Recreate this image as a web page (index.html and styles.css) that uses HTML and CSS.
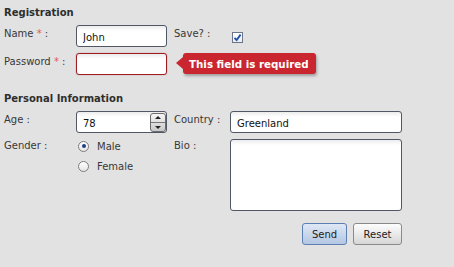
FILE: index.html
```html
<!DOCTYPE html>
<html lang="en">
<head>
  <meta charset="UTF-8">
  <title>Registration Form</title>
  <link rel="stylesheet" href="styles.css">
</head>
<body>
  <form class="form">
    <h2 class="section-title">Registration</h2>
    <div class="grid reg-grid">
      <label class="lbl">Name <span class="req">*</span> :</label>
      <div class="cell"><input class="field" type="text" value="John"></div>
      <label class="lbl">Save? :</label>
      <div class="cell">
        <span class="check">
          <svg width="9" height="9" viewBox="0 0 9 9"><path d="M1.5 4.8 L3.6 7 L7.6 1.6" fill="none" stroke="#1d4fa8" stroke-width="1.8"/></svg>
        </span>
      </div>

      <label class="lbl">Password <span class="req">*</span> :</label>
      <div class="cell tip-anchor">
        <input class="field invalid" type="password">
        <div class="tip">This field is required</div>
      </div>
    </div>

    <h2 class="section-title second">Personal Information</h2>
    <div class="grid info-grid">
      <label class="lbl">Age :</label>
      <div class="cell spin-wrap">
        <input class="field" type="text" value="78">
        <span class="spinner">
          <span class="spin-up"></span>
          <span class="spin-down"></span>
        </span>
      </div>
      <label class="lbl">Country :</label>
      <div class="cell"><input class="field wide" type="text" value="Greenland"></div>

      <label class="lbl top">Gender :</label>
      <div class="cell radios">
        <div class="radio-item"><span class="radio on"></span>Male</div>
        <div class="radio-item"><span class="radio"></span>Female</div>
      </div>
      <label class="lbl top">Bio :</label>
      <div class="cell"><textarea class="field area"></textarea></div>
    </div>

    <div class="actions">
      <button type="button" class="btn primary">Send</button>
      <button type="button" class="btn">Reset</button>
    </div>
  </form>
</body>
</html>
```

FILE: styles.css
```css
body {
  margin: 0;
  padding: 4px;
  background-color: #e2e2e2;
  font-family: "DejaVu Sans", Verdana, sans-serif;
  font-size: 10px;
  color: #333;
}
.form {
  width: 398px;
}
.section-title {
  margin: 0;
  font-size: 10px;
  font-weight: bold;
  line-height: 17px;
  color: #2e2e2e;
}
.section-title.second {
  margin-top: 15px;
}
.grid {
  display: grid;
  grid-template-columns: 72px 98px 56px 172px;
  row-gap: 6px;
}
.reg-grid {
  margin-top: 4px;
}
.info-grid {
  margin-top: 4px;
}
.lbl {
  display: block;
  line-height: 18px;
  color: #383838;
}
.lbl.top {
  line-height: 14px;
}
.req {
  color: #e0555c;
}
.cell {
  display: flex;
  align-items: center;
}
.field {
  box-sizing: border-box;
  width: 91px;
  height: 22px;
  margin: 0;
  padding: 3px 6px 0;
  border: 1px solid #4f5864;
  border-radius: 3px;
  background: linear-gradient(#ececec, #fff 5px);
  font-family: "DejaVu Sans", Verdana, sans-serif;
  font-size: 10px;
  color: #111;
  outline: none;
}
.field.invalid {
  border-color: #9c1d22;
  box-shadow: 0 0 1px #c44;
}
.field.wide {
  width: 172px;
}
.field.area {
  width: 172px;
  height: 72px;
  resize: none;
}

/* checkbox */
.check {
  display: flex;
  align-items: center;
  justify-content: center;
  width: 9px;
  height: 9px;
  margin: 2px 0 0 2px;
  border: 1px solid #6c7688;
  background: linear-gradient(#fff, #e9ecf2);
}

/* tooltip */
.tip-anchor {
  position: relative;
}
.tip {
  position: absolute;
  left: 107px;
  top: 0;
  height: 21px;
  padding: 0 7px 0 6px;
  display: flex;
  align-items: center;
  background: #c9262f;
  border-radius: 3px;
  color: #fff;
  font-weight: bold;
  font-size: 10.3px;
  white-space: nowrap;
  box-shadow: 1px 2px 3px rgba(0, 0, 0, 0.3);
}
.tip::before {
  content: "";
  position: absolute;
  left: -7px;
  top: 4px;
  border-top: 6px solid transparent;
  border-bottom: 6px solid transparent;
  border-right: 7px solid #c9262f;
}

/* spinner */
.spin-wrap {
  position: relative;
  width: 91px;
}
.spinner {
  position: absolute;
  right: 1px;
  top: 2px;
  width: 14px;
  height: 17px;
  border: 1px solid #6b6b6b;
  border-radius: 3px;
  background: linear-gradient(#f6f6f6, #c9c9c9);
  display: flex;
  flex-direction: column;
  overflow: hidden;
}
.spin-up,
.spin-down {
  flex: 1;
  position: relative;
}
.spin-up {
  border-bottom: 1px solid #777;
}
.spin-up::after,
.spin-down::after {
  content: "";
  position: absolute;
  left: 4px;
  border-left: 3px solid transparent;
  border-right: 3px solid transparent;
}
.spin-up::after {
  top: 2px;
  border-bottom: 3px solid #222;
}
.spin-down::after {
  top: 3px;
  border-top: 3px solid #222;
}

/* radios */
.radios {
  flex-direction: column;
  align-items: flex-start;
  gap: 6px;
}
.radio-item {
  display: flex;
  align-items: center;
  height: 14px;
  padding-left: 2px;
  color: #383838;
}
.radio {
  box-sizing: border-box;
  width: 11px;
  height: 11px;
  margin-right: 8px;
  border: 1px solid #7d7d7d;
  border-radius: 50%;
  background: linear-gradient(#fff, #e6e6e6);
  position: relative;
}
.radio.on::after {
  content: "";
  position: absolute;
  left: 2.5px;
  top: 2.5px;
  width: 4px;
  height: 4px;
  border-radius: 50%;
  background: #1e3f86;
}

/* buttons */
.actions {
  display: flex;
  justify-content: flex-end;
  gap: 6px;
  margin-top: 12px;
}
.btn {
  height: 22px;
  padding: 0 8px;
  border: 1px solid #8a8a8a;
  border-radius: 3px;
  background: linear-gradient(#fdfdfd, #d6d6d6);
  font-family: "DejaVu Sans", Verdana, sans-serif;
  font-size: 10px;
  color: #222;
}
.btn.primary {
  width: 45px;
  border-color: #5e7fb3;
  background: linear-gradient(#dfe8f5, #b3c6e3);
}
.btn:not(.primary) {
  width: 49px;
}
```
